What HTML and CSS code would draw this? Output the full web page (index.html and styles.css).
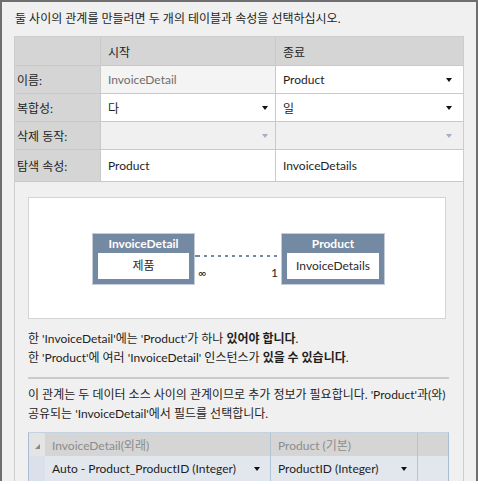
FILE: index.html
```html
<!DOCTYPE html>
<html>
<head>
<meta charset="utf-8">
<link rel="stylesheet" href="styles.css">
</head>
<body>
<div class="win">
  <div class="title">둘 사이의 관계를 만들려면 두 개의 테이블과 속성을 선택하십시오.</div>
  <div class="panel">
    <div class="props">
      <div class="c lbl"></div>
      <div class="c hdr">시작</div>
      <div class="c hdr">종료</div>

      <div class="c lbl">이름:</div>
      <div class="c ro">InvoiceDetail</div>
      <div class="c val v3"><span>Product</span><i class="arr"></i></div>

      <div class="c lbl">복합성:</div>
      <div class="c val v2"><span>다</span><i class="arr"></i></div>
      <div class="c val v3"><span>일</span><i class="arr"></i></div>

      <div class="c lbl">삭제 동작:</div>
      <div class="c dis v2"><span></span><i class="arr light"></i></div>
      <div class="c dis v3"><span></span><i class="arr light"></i></div>

      <div class="c lbl">탐색 속성:</div>
      <div class="c val">Product</div>
      <div class="c val">InvoiceDetails</div>
    </div>

    <div class="diagram">
      <div class="entity">
        <div class="ent-title">InvoiceDetail</div>
        <div class="ent-body">제품</div>
      </div>
      <div class="conn">
        <div class="dots"></div>
        <div class="mult"><span class="inf">∞</span><span>1</span></div>
      </div>
      <div class="entity e2">
        <div class="ent-title">Product</div>
        <div class="ent-body">InvoiceDetails</div>
      </div>
    </div>

    <div class="desc">
      <div>한 'InvoiceDetail'에는 'Product'가 하나 <b>있어야 합니다</b>.</div>
      <div>한 'Product'에 여러 'InvoiceDetail' 인스턴스가 <b>있을 수 있습니다</b>.</div>
    </div>
    <div class="sep"></div>
    <div class="desc2">
      <div>이 관계는 두 데이터 소스 사이의 관계이므로 추가 정보가 필요합니다. 'Product'과(와)</div>
      <div>공유되는 'InvoiceDetail'에서 필드를 선택합니다.</div>
    </div>

    <div class="keys">
      <div class="krow khead">
        <div class="ksel"><i class="tri"></i></div>
        <div class="kc k1">InvoiceDetail(외래)</div>
        <div class="kc k2">Product (기본)</div>
        <div class="kc k3"></div>
      </div>
      <div class="krow kdata">
        <div class="ksel"></div>
        <div class="kc k1"><span>Auto - Product_ProductID (Integer)</span><i class="arr"></i></div>
        <div class="kc k2"><span>ProductID (Integer)</span><i class="arr"></i></div>
        <div class="kc k3"></div>
      </div>
    </div>
  </div>
</div>
</body>
</html>
```
FILE: styles.css
```css
html, body {
  margin: 0;
  padding: 0;
  background: #ffffff;
}
body {
  font-family: Lato, "Noto Sans CJK KR", sans-serif;
  font-size: 12px;
  color: #1e1e1e;
}
.win {
  width: 478px;
  height: 481px;
  box-sizing: border-box;
  border: 2px solid #6f6f6f;
  border-bottom: none;
  background: #f0f0f0;
  overflow: hidden;
}
.title {
  height: 34px;
  line-height: 34px;
  padding-left: 13px;
  white-space: nowrap;
}
.panel {
  margin-left: 12px;
  width: 450px;
  height: 460px;
  box-sizing: border-box;
  border: 1px solid #cdcdcd;
  border-bottom: none;
}
.props {
  display: grid;
  grid-template-columns: 85px 174px 187px;
  grid-template-rows: 28px 27px 27px 27px 31px;
  gap: 1px;
  background: #c9c9c9;
  padding-bottom: 1px;
}
.c {
  display: flex;
  align-items: center;
  padding: 0 7px;
  white-space: nowrap;
}
.lbl {
  background: #d5d5d5;
  padding-left: 2px;
}
.hdr {
  background: #d5d5d5;
}
.ro {
  background: #f4f4f4;
  color: #6e6e6e;
}
.val {
  background: #ffffff;
}
.dis {
  background: #f0f0f0;
}
.v2, .v3 {
  justify-content: space-between;
}
.v3 {
  padding-right: 11px;
}
.arr {
  display: block;
  width: 0;
  height: 0;
  border-left: 3.5px solid transparent;
  border-right: 3.5px solid transparent;
  border-top: 4px solid #111;
}
.arr.light {
  border-top-color: #a4afc0;
}
.diagram {
  margin: 15px 0 0 13px;
  width: 418px;
  height: 122px;
  box-sizing: border-box;
  border: 1px solid #d3d3d3;
  background: #fff;
  display: flex;
  align-items: flex-start;
  padding: 35px 0 0 63px;
}
.entity {
  width: 103px;
  height: 52px;
  box-sizing: border-box;
  background: #7489a2;
  border: 1px solid #c3ccd7;
  display: flex;
  flex-direction: column;
}
.e2 {
  width: 104px;
}
.ent-title {
  height: 19px;
  line-height: 19px;
  text-align: center;
  color: #fff;
  font-weight: bold;
}
.ent-body {
  margin: 0 5px;
  height: 26px;
  line-height: 26px;
  background: #fff;
  text-align: center;
  color: #2a2a2a;
}
.conn {
  width: 86px;
  display: flex;
  flex-direction: column;
}
.dots {
  margin-top: 22px;
  height: 2px;
  background: repeating-linear-gradient(to right, #7489a2 0 3px, transparent 3px 7px);
  background-position: 2px 0;
}
.mult {
  display: flex;
  justify-content: space-between;
  padding: 0 3px;
  margin-top: 9px;
  line-height: 14px;
  font-size: 12px;
}
.inf {
  font-size: 11px;
}
.desc {
  margin: 10px 0 0 13px;
  line-height: 19px;
  white-space: nowrap;
}
.desc b {
  font-weight: bold;
}
.sep {
  margin: 10px 0 0 13px;
  width: 421px;
  height: 2px;
  background: #cbcbcb;
}
.desc2 {
  margin: 6px 0 0 13px;
  line-height: 19px;
  white-space: nowrap;
}
.keys {
  margin: 9px 0 0 13px;
  width: 421px;
  box-sizing: border-box;
  border-left: 1px solid #a9bdd4;
  border-right: 1px solid #a9bdd4;
  border-top: 1px solid #c5d2e0;
}
.krow {
  display: flex;
}
.khead {
  height: 23px;
  background: #d5d5d5;
  color: #8c8c8c;
}
.kdata {
  height: 25px;
  background: #e2e7ee;
}
.ksel {
  width: 16px;
  display: flex;
  align-items: flex-end;
  justify-content: center;
}
.khead .ksel {
  background: #e4e4e4;
}
.kdata .ksel {
  background: #dae1ea;
}
.tri {
  display: block;
  width: 0;
  height: 0;
  border-left: 5px solid transparent;
  border-bottom: 5px solid #8a8a8a;
  margin-bottom: 7px;
}
.kc {
  display: flex;
  align-items: center;
  justify-content: space-between;
  padding: 0 10px 0 7px;
  white-space: nowrap;
  box-sizing: border-box;
}
.k1 {
  width: 226px;
  border-right: 1px solid #b2c4d8;
}
.k2 {
  width: 147px;
  border-right: 1px solid #b2c4d8;
}
.k3 {
  flex: 1;
}
```
